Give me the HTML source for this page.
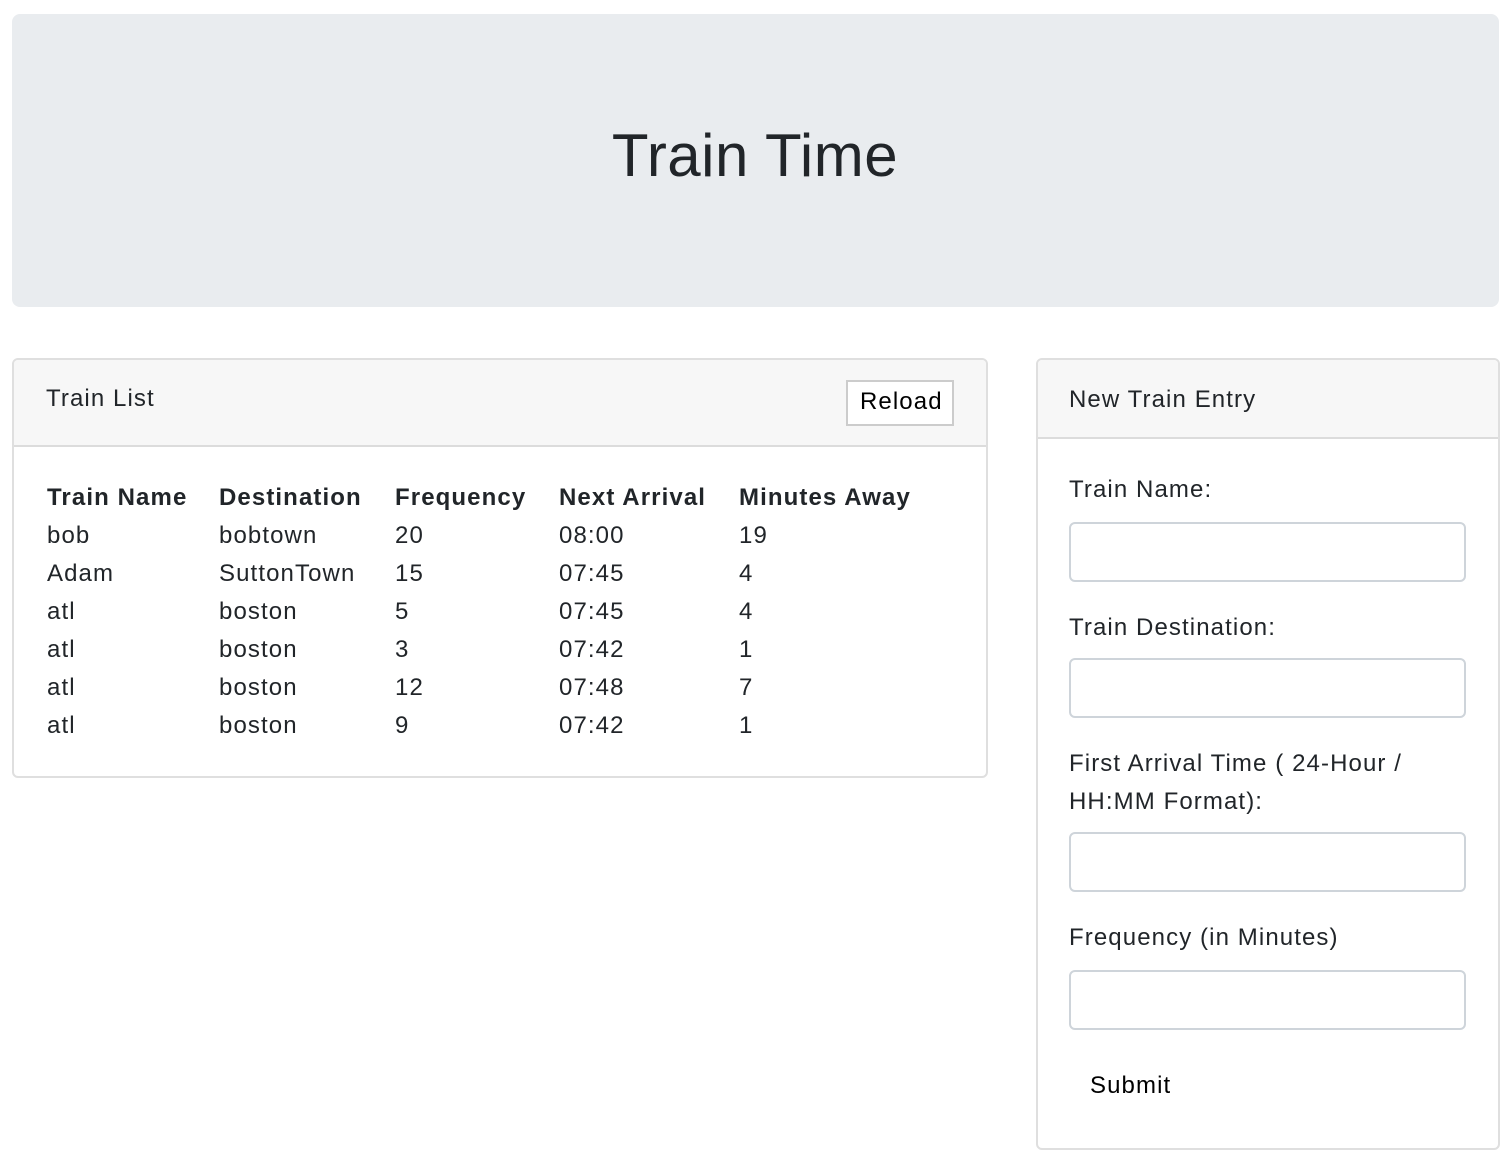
<!DOCTYPE html>
<html><head><meta charset="utf-8"><style>
*{box-sizing:border-box;margin:0;padding:0}
body{width:1510px;height:1158px;background:#fff;font-family:"Liberation Sans",sans-serif;color:#212529;position:relative;overflow:hidden}
.a{position:absolute;white-space:nowrap;line-height:1}
.jumbo{position:absolute;left:12px;top:14px;width:1487px;height:293px;background:#e9ecef;border-radius:8px}
.card{position:absolute;border:2px solid #dfdfdf;border-radius:6px;overflow:hidden;background:#fff}
.hdr{position:absolute;left:0;top:0;right:0;background:#f7f7f7;border-bottom:2px solid #dcdcdc}
.t{font-size:24px;letter-spacing:1.1px}
.b{font-weight:bold}
.inp{position:absolute;left:1069px;width:397px;height:60px;border:2px solid #ced4da;border-radius:6px;background:#fff}
</style></head><body>
<div class="jumbo"></div>
<div class="a" style="left:0;width:1510px;text-align:center;top:126px;font-size:60px;letter-spacing:0.5px">Train Time</div>

<div class="card" style="left:12px;top:358px;width:976px;height:420px">
  <div class="hdr" style="height:87px"></div>
</div>
<div class="a t" style="left:46px;top:387px">Train List</div>
<div style="position:absolute;left:846px;top:380px;width:108px;height:46px;border:2px solid #ccc;background:#fff"></div>
<div class="a t" style="left:860px;top:390px;color:#000">Reload</div>

<div class="a t b" style="left:47px;top:486px">Train Name</div>
<div class="a t b" style="left:219px;top:486px">Destination</div>
<div class="a t b" style="left:395px;top:486px">Frequency</div>
<div class="a t b" style="left:559px;top:486px">Next Arrival</div>
<div class="a t b" style="left:739px;top:486px">Minutes Away</div>

<div class="a t" style="left:47px;top:524px">bob</div><div class="a t" style="left:219px;top:524px">bobtown</div><div class="a t" style="left:395px;top:524px">20</div><div class="a t" style="left:559px;top:524px">08:00</div><div class="a t" style="left:739px;top:524px">19</div>
<div class="a t" style="left:47px;top:562px">Adam</div><div class="a t" style="left:219px;top:562px">SuttonTown</div><div class="a t" style="left:395px;top:562px">15</div><div class="a t" style="left:559px;top:562px">07:45</div><div class="a t" style="left:739px;top:562px">4</div>
<div class="a t" style="left:47px;top:600px">atl</div><div class="a t" style="left:219px;top:600px">boston</div><div class="a t" style="left:395px;top:600px">5</div><div class="a t" style="left:559px;top:600px">07:45</div><div class="a t" style="left:739px;top:600px">4</div>
<div class="a t" style="left:47px;top:638px">atl</div><div class="a t" style="left:219px;top:638px">boston</div><div class="a t" style="left:395px;top:638px">3</div><div class="a t" style="left:559px;top:638px">07:42</div><div class="a t" style="left:739px;top:638px">1</div>
<div class="a t" style="left:47px;top:676px">atl</div><div class="a t" style="left:219px;top:676px">boston</div><div class="a t" style="left:395px;top:676px">12</div><div class="a t" style="left:559px;top:676px">07:48</div><div class="a t" style="left:739px;top:676px">7</div>
<div class="a t" style="left:47px;top:714px">atl</div><div class="a t" style="left:219px;top:714px">boston</div><div class="a t" style="left:395px;top:714px">9</div><div class="a t" style="left:559px;top:714px">07:42</div><div class="a t" style="left:739px;top:714px">1</div>

<div class="card" style="left:1036px;top:358px;width:464px;height:792px">
  <div class="hdr" style="height:79px"></div>
</div>
<div class="a t" style="left:1069px;top:388px">New Train Entry</div>
<div class="a t" style="left:1069px;top:478px">Train Name:</div>
<div class="inp" style="top:522px"></div>
<div class="a t" style="left:1069px;top:616px">Train Destination:</div>
<div class="inp" style="top:658px"></div>
<div class="a t" style="left:1069px;top:752px">First Arrival Time ( 24-Hour /</div>
<div class="a t" style="left:1069px;top:790px">HH:MM Format):</div>
<div class="inp" style="top:832px"></div>
<div class="a t" style="left:1069px;top:926px">Frequency (in Minutes)</div>
<div class="inp" style="top:970px"></div>
<div class="a t" style="left:1090px;top:1074px;color:#000">Submit</div>
</body></html>
